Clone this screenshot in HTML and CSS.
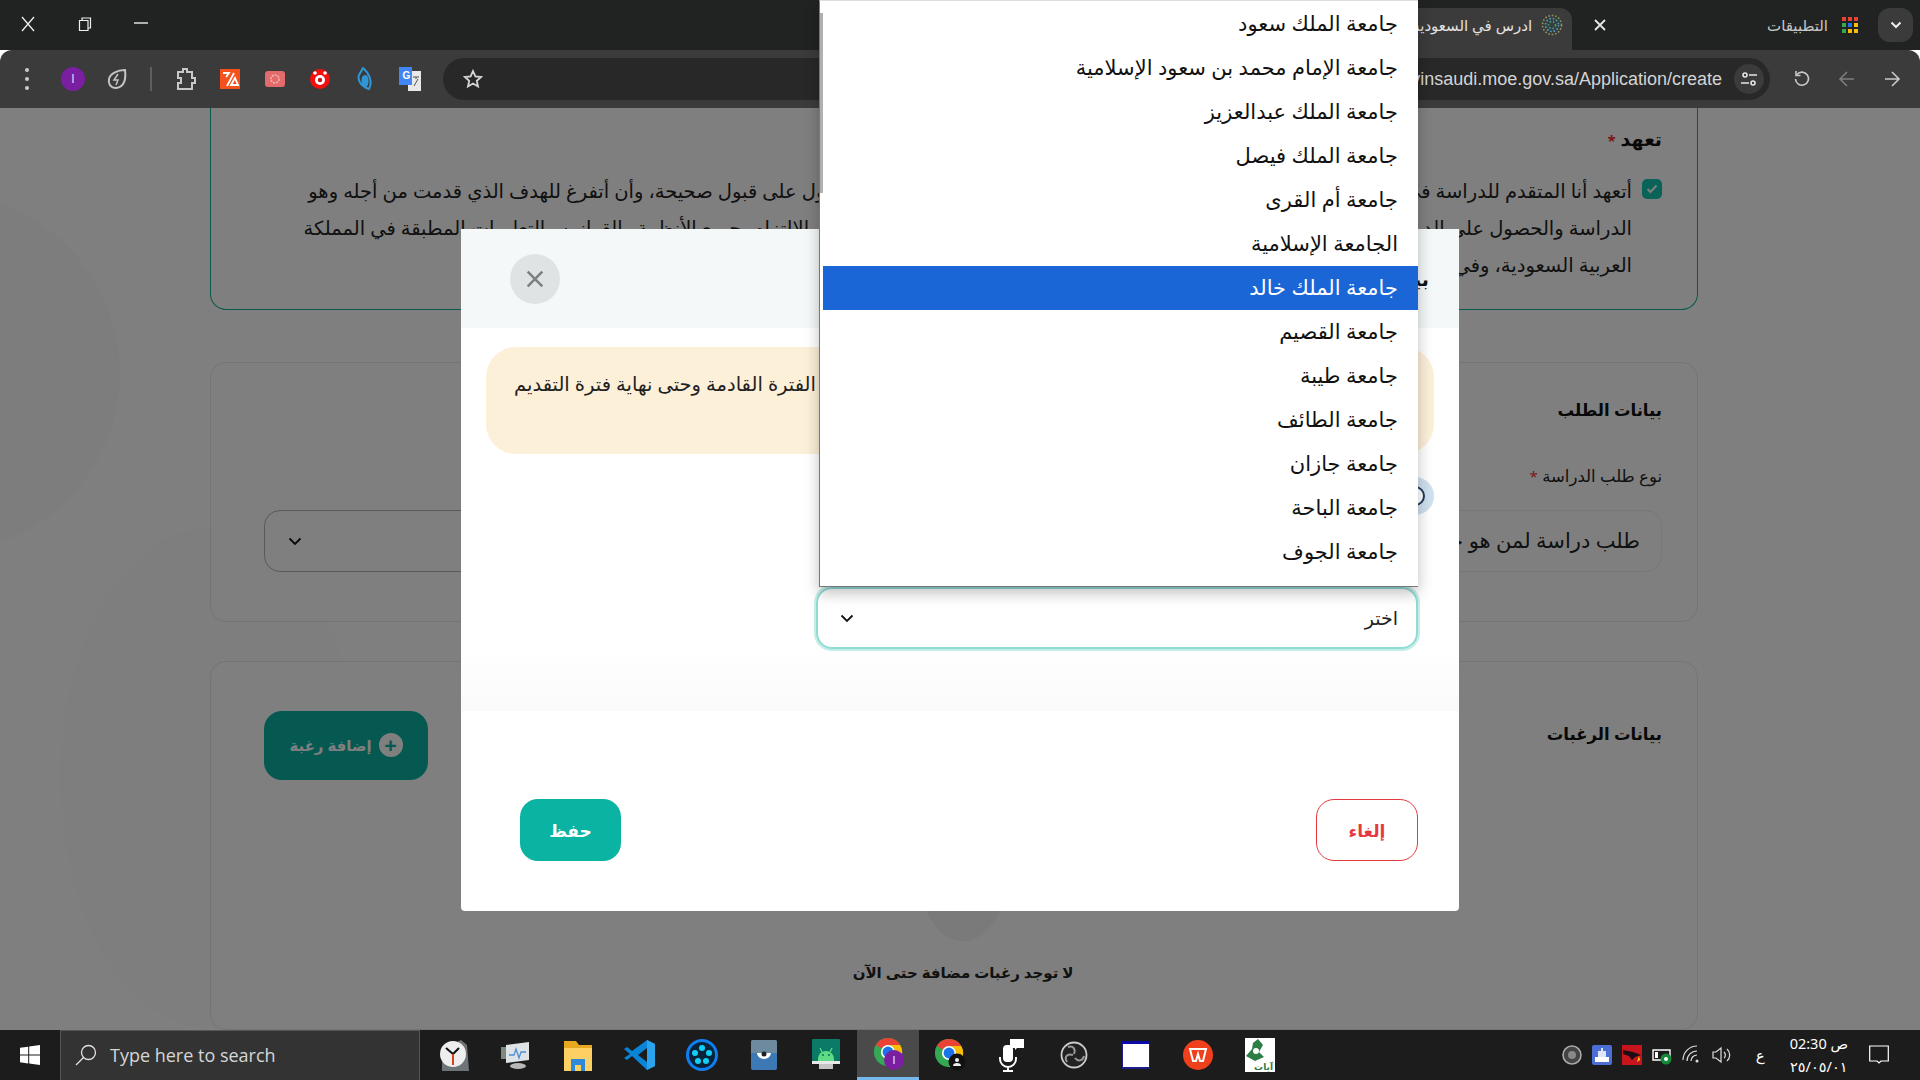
FILE: index.html
```html
<!DOCTYPE html>
<html lang="ar">
<head>
    <meta charset="UTF-8">
    <meta name="viewport" content="width=device-width, initial-scale=1.0">
    <title>ادرس في السعودية</title>
    <link rel="stylesheet" href="styles.css">
</head>
<body>
    <svg class="defs" width="0" height="0">
        <symbol id="chrome" viewBox="0 0 32 32">
            <circle cx="16" cy="16" r="15" fill="#34a853"/>
            <path d="M16 1a15 15 0 0 1 13 7.500H16a7.500 7.500 0 0 0-6.500 3.750L3 8.500A15 15 0 0 1 16 1z" fill="#ea4335"/>
            <path d="M29 8.500A15 15 0 0 1 16 31l6.500-11.250A7.500 7.500 0 0 0 16 8.500z" fill="#fbbc04"/>
            <circle cx="16" cy="16" r="7.500" fill="#fff"/>
            <circle cx="16" cy="16" r="5.800" fill="#1a73e8"/>
        </symbol>
    </svg>

    <div class="app">
        <div class="tabstrip">
            <div class="winbtns">
                <svg width="16" height="16" viewBox="0 0 16 16"><path d="M2 1l12 14M14 1L2 15" stroke="#eee" stroke-width="1.300" fill="none"/></svg>
                <svg width="14" height="14" viewBox="0 0 14 14"><path d="M1.500 3.500h8.500v10H1.500zM4 3.500V1h8.500v10H10" stroke="#eee" stroke-width="1.200" fill="none"/></svg>
                <svg width="14" height="14" viewBox="0 0 14 14"><path d="M0 6h14" stroke="#eee" stroke-width="1.400"/></svg>
            </div>
            <div class="tab">
                <span class="tab-title">ادرس في السعودية</span>
                <svg width="22" height="22" viewBox="0 0 22 22" fill="none" stroke-width="1.600" stroke-dasharray="1.600 1.800">
                    <circle cx="11" cy="11" r="9.500" stroke="#8a9a5b"/>
                    <circle cx="11" cy="11" r="6.500" stroke="#4aa3c7"/>
                    <circle cx="11" cy="11" r="3.500" stroke="#2fa58e"/>
                </svg>
            </div>
            <svg class="tab-close" width="12" height="12" viewBox="0 0 12 12"><path d="M1 1l10 10M11 1L1 11" stroke="#e6e6e6" stroke-width="1.800"/></svg>
            <div class="apps">
                <span>التطبيقات</span>
                <svg width="18" height="18" viewBox="0 0 18 18">
                    <path d="M1 1h4v4H1z" fill="#ea4335"/><path d="M7 1h4v4H7z" fill="#ea4335"/><path d="M13 1h4v4h-4z" fill="#ea4335"/>
                    <path d="M1 7h4v4H1z" fill="#34a853"/><path d="M7 7h4v4H7z" fill="#1a73e8"/><path d="M13 7h4v4h-4z" fill="#fbbc04"/>
                    <path d="M1 13h4v4H1z" fill="#34a853"/><path d="M7 13h4v4H7z" fill="#fbbc04"/><path d="M13 13h4v4h-4z" fill="#fbbc04"/>
                </svg>
            </div>
            <div class="tabsearch">
                <svg width="12" height="8" viewBox="0 0 12 8"><path d="M1.500 1.500L6 6l4.500-4.500" stroke="#eee" stroke-width="2" fill="none"/></svg>
            </div>
        </div>

        <div class="toolbar">
            <div class="exts">
                <svg class="ext" width="6" height="26" viewBox="0 0 6 26"><circle cx="3" cy="4" r="2" fill="#ccc"/><circle cx="3" cy="13" r="2" fill="#ccc"/><circle cx="3" cy="22" r="2" fill="#ccc"/></svg>
                <span class="avatar">I</span>
                <svg class="ext" width="22" height="24" viewBox="0 0 22 24" fill="none" stroke="#c4c4c4" stroke-width="2"><path d="M19 3c1 8 0 17-9 18-6 0-8-5-7-9 1-5 8-9 16-9z"/><path d="M12 7l-4 6h4l-2 5" stroke-width="1.500"/></svg>
                <span class="divider"></span>
                <svg class="ext" width="22" height="24" viewBox="0 0 22 24" fill="none" stroke="#c8c8c8" stroke-width="2"><path d="M3 5h5V2h4v3h5v6h3v5h-3v6H3v-6h3v-5H3z"/></svg>
                <svg class="ext" width="20" height="20" viewBox="0 0 20 20"><path d="M0 0h20v20H0z" fill="#f4511e"/><path d="M3 4h6l-3 4M14 4L7 17M11 16l4-7 3 7z" stroke="#fff" stroke-width="1.800" fill="none"/></svg>
                <svg class="ext" width="20" height="18" viewBox="0 0 20 18"><rect y="1" width="20" height="16" rx="3" fill="#e36b6b"/><circle cx="10" cy="9" r="4" fill="none" stroke="#f3b7b7" stroke-width="1.500" stroke-dasharray="2 1"/></svg>
                <svg class="ext" width="20" height="22" viewBox="0 0 20 22"><circle cx="10" cy="11" r="10" fill="#f40f0f"/><circle cx="10" cy="12" r="5" fill="#fff"/><circle cx="10" cy="12" r="2.200" fill="#c01818"/><circle cx="5" cy="5" r="1.800" fill="#fff"/><circle cx="15" cy="5" r="1.800" fill="#fff"/></svg>
                <svg class="ext" width="18" height="24" viewBox="0 0 18 24" fill="none" stroke="#2f97d6" stroke-width="2"><path d="M8 1c6 5 10 14 6 21C7 20 2 14 4 8z"/><ellipse cx="10" cy="14" rx="2.500" ry="5" fill="#2f97d6"/></svg>
                <svg class="ext" width="22" height="24" viewBox="0 0 22 24"><path d="M9 4h13v20H9z" fill="#e8e8e8"/><path d="M0 0h13v18H0z" fill="#4285f4"/><text x="3.500" y="12" class="ext-g">G</text><path d="M14 10h6M17 10v2M15 19l4-7" stroke="#555" stroke-width="1" fill="none"/></svg>
            </div>
            <div class="omnibox">
                <svg class="star" width="20" height="20" viewBox="0 0 20 20"><path d="M10 2l2.400 5.400 5.600.6-4.200 3.800 1.200 5.700-5-3-5 3 1.200-5.700L2 8l5.600-.6z" fill="none" stroke="#d6d6d6" stroke-width="1.800"/></svg>
                <span class="url">https://studyinsaudi.moe.gov.sa/Application/create</span>
                <span class="tune">
                    <svg width="16" height="14" viewBox="0 0 16 14" fill="none" stroke="#e6e6e6" stroke-width="1.600"><circle cx="4" cy="3" r="2"/><path d="M8 3h8M0 11h8"/><circle cx="12" cy="11" r="2"/></svg>
                </span>
            </div>
            <div class="navbtns">
                <svg width="18" height="18" viewBox="0 0 18 18" fill="none" stroke="#c9c9c9" stroke-width="1.600"><path d="M4 4.500a6.500 6.500 0 1 1-1.500 4.500"/><path d="M3 1v4.500h4.500"/></svg>
                <svg width="18" height="18" viewBox="0 0 18 18" fill="none" stroke="#7d7d7d" stroke-width="1.600"><path d="M16 9H2M9 2L2 9l7 7"/></svg>
                <svg width="18" height="18" viewBox="0 0 18 18" fill="none" stroke="#c9c9c9" stroke-width="1.600"><path d="M2 9h14M9 2l7 7-7 7"/></svg>
            </div>
        </div>

        <div class="page">
            <div class="blob blob-a"></div>
            <div class="blob blob-b"></div>

            <section class="card card-pledge">
                <h2 class="card-title">تعهد <span class="req">*</span></h2>
                <div class="pledge">
                    <span class="checkbox">
                        <svg width="12" height="10" viewBox="0 0 12 10"><path d="M1.500 5l3 3 6-6.500" stroke="#fff" stroke-width="2" fill="none"/></svg>
                    </span>
                    <p class="pledge-text">
                        <span>أتعهد أنا المتقدم للدراسة في المملكة العربية السعودية بموجب الطلب بأن جميع البيانات المقدمة للحصول على قبول صحيحة، وأن أتفرغ للهدف الذي قدمت من أجله وهو</span>
                        <span>الدراسة والحصول على الدرجة العلمية، وأن ألتزم بجميع التعليمات الصادرة عن الجهات المختصة، وأتعهد بالالتزام بجميع الأنظمة والقوانين والتعليمات المطبقة في المملكة</span>
                        <span>العربية السعودية، وفي حال مخالفة ذلك أتحمل كامل المسؤولية.</span>
                    </p>
                </div>
            </section>

            <section class="card card-request">
                <h2 class="card-title">بيانات الطلب</h2>
                <label class="field-label">نوع طلب الدراسة <span class="req">*</span></label>
                <div class="request-row">
                    <div class="fake-input">طلب دراسة لمن هو خارج المملكة</div>
                    <div class="fake-select">
                        <svg width="14" height="9" viewBox="0 0 14 9"><path d="M1.500 1.500L7 7l5.500-5.500" stroke="#111" stroke-width="1.800" fill="none"/></svg>
                    </div>
                </div>
            </section>

            <section class="card card-wishes">
                <div class="wishes-head">
                    <h2 class="card-title">بيانات الرغبات</h2>
                    <button class="add-btn">
                        <span class="add-icon">+</span>
                        إضافة رغبة
                    </button>
                </div>
                <div class="empty">
                    <div class="empty-pic"></div>
                    <p>لا توجد رغبات مضافة حتى الآن</p>
                </div>
            </section>

            <div class="backdrop"></div>

            <div class="modal">
                <div class="modal-head">
                    <span class="modal-title">بيانات الرغبة</span>
                    <button class="modal-close">
                        <svg width="18" height="18" viewBox="0 0 16 16"><path d="M1.500 1.500l13 13M14.500 1.500l-13 13" stroke="#7a7f7f" stroke-width="2.200"/></svg>
                    </button>
                </div>
                <div class="modal-body">
                    <div class="alert">يمكنك التقديم من بداية الفترة القادمة وحتى نهاية فترة التقديم</div>
                    <span class="radio"></span>
                    <div class="uni-select">
                        <span>اختر</span>
                        <svg width="14" height="9" viewBox="0 0 14 9"><path d="M1.500 1.500L7 7l5.500-5.500" stroke="#111" stroke-width="1.800" fill="none"/></svg>
                    </div>
                </div>
                <div class="modal-fade"></div>
                <div class="modal-foot">
                    <button class="btn-cancel">إلغاء</button>
                    <button class="btn-save">حفظ</button>
                </div>
            </div>
        </div>

        <div class="taskbar">
            <div class="start">
                <svg width="20" height="20" viewBox="0 0 20 20"><path d="M0 2.800l8.200-1.100v7.900H0zM9.200 1.500L20 0v9.600H9.200zM0 10.500h8.200v7.900L0 17.200zM9.200 10.500H20V20L9.200 18.500z" fill="#fff"/></svg>
            </div>
            <div class="search">
                <svg width="22" height="22" viewBox="0 0 22 22" fill="none" stroke="#e2e2e2" stroke-width="1.300"><circle cx="13.500" cy="8.500" r="7"/><path d="M8.500 13.500L1 21"/></svg>
                <span>Type here to search</span>
            </div>
            <div class="task-icons">
                <span class="task"><svg width="30" height="32" viewBox="0 0 30 32"><path d="M3 32V12L22 1l6 5 2 26z" fill="#6f7479"/><circle cx="14" cy="15" r="13" fill="#eee"/><path d="M14 15L7 9M14 15l6-6" stroke="#111" stroke-width="2"/><path d="M14 15v11" stroke="#d8431e" stroke-width="2"/></svg></span>
                <span class="task"><svg width="30" height="32" viewBox="0 0 30 32"><path d="M5 6l23-3v18L5 24z" fill="#dfe3e6"/><path d="M8 16h5l2-6 3 9 2-6h5" stroke="#4a90d9" stroke-width="1.300" fill="none"/><ellipse cx="17" cy="27" rx="8" ry="3" fill="#b8b8b8"/><path d="M0 8h5v12H0z" fill="#7d8a80"/></svg></span>
                <span class="task"><svg width="28" height="32" viewBox="0 0 28 32"><path d="M0 2h12l3 4h13v26H0z" fill="#e8a920"/><path d="M0 9h28v23H0z" fill="#fcd062"/><path d="M7 20h14v12h-4v-6h-6v6H7z" fill="#2f89d8"/></svg></span>
                <span class="task"><svg width="32" height="32" viewBox="0 0 32 32"><path d="M23 1l8 4v22l-8 4L8 17l-5 4-3-2 6-4-6-5 3-2 5 4z" fill="#0a84d6"/><path d="M23 9v14l-9-7z" fill="#1c1c1c"/><path d="M23 1l8 4v22l-8 4z" fill="#2aa3ec"/></svg></span>
                <span class="task"><svg width="32" height="32" viewBox="0 0 32 32"><circle cx="16" cy="16" r="14.500" fill="#07233b" stroke="#0f7ff0" stroke-width="3"/><g fill="#10d0f5"><circle cx="16" cy="9" r="3"/><circle cx="9" cy="14" r="3"/><circle cx="23" cy="14" r="3"/><circle cx="12" cy="22" r="3"/><circle cx="20" cy="22" r="3"/></g></svg></span>
                <span class="task"><svg width="26" height="32" viewBox="0 0 26 32"><rect y="1" width="26" height="30" rx="2" fill="#3d7ab5"/><path d="M0 3a2 2 0 0 1 2-2h22a2 2 0 0 1 2 2v11H0z" fill="#6d8a9e"/><path d="M6 14h14a7 6 0 0 1-14 0z" fill="#fff"/><circle cx="13" cy="15" r="2.500" fill="#222"/></svg></span>
                <span class="task"><svg width="28" height="32" viewBox="0 0 28 32"><rect width="28" height="22" rx="1" fill="#0b7a66"/><path d="M6 20a8 8 0 0 1 16 0z" fill="#5fdc83"/><path d="M8 9l2 4M20 9l-2 4" stroke="#5fdc83" stroke-width="1.300"/><circle cx="11" cy="16" r="1.100" fill="#0b7a66"/><circle cx="17" cy="16" r="1.100" fill="#0b7a66"/><path d="M6 20h16v2H6z" fill="#5fdc83"/><path d="M0 22h28v3H0z" fill="#e8e8e8"/><path d="M7 25h14v5H7z" fill="#c4c4c4"/></svg></span>
                <span class="task task-active">
                    <svg width="30" height="36" viewBox="0 0 30 36"><use href="#chrome" width="30" height="30" y="1"/><circle cx="21" cy="24" r="10" fill="#7b1fa2"/><path d="M21 20v8" stroke="#d9b3e8" stroke-width="1.600"/></svg>
                </span>
                <span class="task">
                    <svg width="32" height="36" viewBox="0 0 32 36"><use href="#chrome" width="30" height="30" y="1"/><circle cx="23" cy="25" r="8.500" fill="#111"/><circle cx="23" cy="23" r="2" fill="#eee"/><path d="M19 29a4 3 0 0 1 8 0z" fill="#eee"/></svg>
                </span>
                <span class="task"><svg width="26" height="34" viewBox="0 0 26 34" fill="none" stroke="#fff" stroke-width="2"><rect x="4" y="7" width="10" height="17" rx="4" fill="#fff" stroke="none"/><path d="M1 19v2a8 8 0 0 0 16 0v-2M9 29v4M4 33h10"/><path d="M11 1h14v9h-7l-2 2v-2h-5z" fill="#fff" stroke="none"/></svg></span>
                <span class="task"><svg width="28" height="28" viewBox="0 0 28 28"><circle cx="14" cy="14" r="12.500" fill="#222" stroke="#ccc" stroke-width="1.800"/><path d="M8 6c5-2 8 2 6 7M24 15c-1 5-6 6-9 2M7 21c-3-5 0-9 6-7" stroke="#999" stroke-width="2" fill="none"/></svg></span>
                <span class="task"><svg width="28" height="28" viewBox="0 0 28 28"><rect width="28" height="28" fill="#1c1f8a"/><path d="M0 0h28v3H0z" fill="#0a0aa8"/><rect x="1" y="3" width="26" height="23" fill="#fff"/></svg></span>
                <span class="task"><svg width="30" height="30" viewBox="0 0 30 30"><circle cx="15" cy="15" r="15" fill="#f0401b"/><path d="M7 9h16l-3 12h-3l-2-7-2 7h-3z" fill="none" stroke="#fff" stroke-width="2"/></svg></span>
                <span class="task"><svg width="30" height="34" viewBox="0 0 30 34"><path d="M0 0h30v34H0z" fill="#fff"/><path d="M13 1l5 6-4 7 5 5-9 4-9-5 6-7 1-6z" fill="#2d7d46"/><circle cx="11" cy="13" r="3" fill="#fff"/><text x="28" y="32" class="ayat">آيات</text></svg></span>
            </div>
            <div class="tray">
                <svg class="tray-a" width="20" height="20" viewBox="0 0 20 20"><circle cx="10" cy="10" r="9" fill="#444" stroke="#aaa" stroke-width="1.600"/><circle cx="10" cy="10" r="4" fill="#888"/></svg>
                <svg class="tray-a" width="20" height="20" viewBox="0 0 20 20"><rect width="20" height="20" rx="2" fill="#4c6fd6"/><path d="M3 12h14v5H3z" fill="#fff"/><path d="M6 12V6h3V3h2v3h3v6z" fill="#dfe7f7"/></svg>
                <svg class="tray-a" width="20" height="20" viewBox="0 0 20 20"><rect width="20" height="20" fill="#c8141c"/><path d="M1 5l10 2 8 3-6 2-3 3-3-4-6-2z" fill="#1c0c16"/><path d="M17 11l-2 6 3-2z" fill="#f4d316"/></svg>
                <svg class="tray-a" width="20" height="20" viewBox="0 0 20 20"><path d="M1 5h17v10H1z" fill="none" stroke="#fff" stroke-width="1.400"/><path d="M3 7h3v6H3z" fill="#fff"/><circle cx="14" cy="14" r="5.500" fill="#138a38"/><circle cx="14" cy="14" r="2" fill="#fff"/></svg>
                <svg class="tray-a" width="20" height="20" viewBox="0 0 20 20" fill="none" stroke="#ddd" stroke-width="1.200"><path d="M1 15A14 14 0 0 1 15 1M5 16A10 10 0 0 1 15 6M9 16a6 6 0 0 1 6-6"/><circle cx="15" cy="16" r="1.500" fill="#ddd" stroke="none"/></svg>
                <svg class="tray-a" width="20" height="20" viewBox="0 0 20 20" fill="none" stroke="#ddd" stroke-width="1.200"><path d="M1 7h3l5-4v14l-5-4H1zM12 7a4 4 0 0 1 0 6M15 4a8 8 0 0 1 0 12"/></svg>
                <span class="lang">ع</span>
                <div class="clock">
                    <span>ص 02:30</span>
                    <span>٢٥/٠٥/٠١</span>
                </div>
                <svg class="notif" width="20" height="20" viewBox="0 0 20 20"><path d="M.7 1h18.600v15H12l-2 2-2-2H.7z" fill="none" stroke="#fff" stroke-width="1.200"/></svg>
            </div>
        </div>

        <div class="dropdown">
            <span class="scroll-thumb"></span>
            <ul class="uni-list">
                <li>جامعة الملك سعود</li>
                <li>جامعة الإمام محمد بن سعود الإسلامية</li>
                <li>جامعة الملك عبدالعزيز</li>
                <li>جامعة الملك فيصل</li>
                <li>جامعة أم القرى</li>
                <li>الجامعة الإسلامية</li>
                <li class="selected">جامعة الملك خالد</li>
                <li>جامعة القصيم</li>
                <li>جامعة طيبة</li>
                <li>جامعة الطائف</li>
                <li>جامعة جازان</li>
                <li>جامعة الباحة</li>
                <li>جامعة الجوف</li>
            </ul>
        </div>
    </div>
</body>
</html>
```
FILE: styles.css
```css
* {
    box-sizing: border-box;
}
html, body {
    margin: 0;
    padding: 0;
    height: 100%;
}
body {
    font-family: "Noto Sans", "DejaVu Sans", sans-serif;
    color: #222;
    overflow: hidden;
}
.defs {
    position: absolute;
}
.ext-g {
    font: bold 10px "Liberation Sans", sans-serif;
    fill: #fff;
}
.ayat {
    font: bold 9px "DejaVu Sans", sans-serif;
    fill: #2d7d46;
    text-anchor: end;
}
.app {
    position: relative;
    width: 1920px;
    height: 1080px;
    display: flex;
    flex-direction: column;
    overflow: hidden;
}

/* browser chrome, mirrored */
.tabstrip {
    height: 50px;
    background-color: #212322;
    display: flex;
    align-items: center;
}
.winbtns {
    display: flex;
    align-items: center;
    gap: 42px;
    padding-left: 20px;
    padding-bottom: 2px;
}
.tab {
    margin-left: auto;
    width: 300px;
    height: 42px;
    align-self: flex-end;
    background-color: #3b3b3b;
    border-radius: 12px 12px 0 0;
    display: flex;
    align-items: center;
    justify-content: flex-end;
    gap: 9px;
    padding: 0 9px 8px 0;
    color: #e3e3e3;
    font-size: 15px;
}
.tab-close {
    margin-left: 22px;
}
.apps {
    margin-left: 161px;
    display: flex;
    align-items: center;
    gap: 13px;
    color: #c9c9c9;
    font-size: 15px;
}
.tabsearch {
    width: 35px;
    height: 34px;
    margin: 0 7px 0 19px;
    border-radius: 12px;
    background-color: #3b3b3b;
    display: flex;
    align-items: center;
    justify-content: center;
}
.toolbar {
    height: 58px;
    background-color: #3b3b3b;
    border-radius: 12px 12px 0 0;
    display: flex;
    align-items: center;
}
.exts {
    width: 443px;
    display: flex;
    align-items: center;
    padding-left: 24px;
    flex-shrink: 0;
}
.ext {
    flex-shrink: 0;
}
.exts .ext:nth-of-type(1) { margin-right: 31px; }
.exts .ext:nth-of-type(2) { margin: 0 22px 0 21px; }
.exts .ext:nth-of-type(3) { margin: 0 23px 0 23px; }
.exts .ext:nth-of-type(4) { margin-right: 25px; }
.exts .ext:nth-of-type(5) { margin-right: 25px; }
.exts .ext:nth-of-type(6) { margin-right: 25px; }
.exts .ext:nth-of-type(7) { margin-right: 26px; }
.avatar {
    width: 24px;
    height: 24px;
    border-radius: 50%;
    background-color: #7b1fa2;
    color: #e8d5f0;
    font: 12px "Liberation Sans", sans-serif;
    display: flex;
    align-items: center;
    justify-content: center;
}
.divider {
    width: 2px;
    height: 24px;
    background-color: #5f5f5f;
}
.omnibox {
    width: 1327px;
    height: 42px;
    background-color: #282828;
    border-radius: 21px;
    display: flex;
    align-items: center;
    padding: 0 6px 0 20px;
    flex-shrink: 0;
}
.url {
    margin-left: auto;
    color: #d4d4d4;
    font-size: 18px;
    font-family: "Liberation Sans", sans-serif;
}
.tune {
    width: 30px;
    height: 30px;
    margin-left: 12px;
    border-radius: 50%;
    background-color: #3b3b3b;
    display: flex;
    align-items: center;
    justify-content: center;
}
.navbtns {
    display: flex;
    align-items: center;
    gap: 27px;
    padding-left: 23px;
}

/* page behind the dialog */
.page {
    position: relative;
    flex: 1;
    min-height: 0;
    overflow: hidden;
    background-color: #fff;
    padding: 0 222px 0 210px;
    direction: rtl;
    display: flex;
    flex-direction: column;
}
.blob {
    position: absolute;
    border-radius: 50%;
    background-color: #fbfbfb;
}
.blob-a {
    width: 360px;
    height: 360px;
    left: -240px;
    top: 85px;
}
.blob-b {
    width: 300px;
    height: 500px;
    left: 60px;
    top: 420px;
    background-color: #fcfcfc;
}
.card {
    position: relative;
    background-color: #fff;
    border: 1px solid #e6e8e8;
    border-radius: 16px;
    padding: 0 35px 0 53px;
}
.card-pledge {
    height: 202px;
    border: 1px solid #0fb39a;
    border-top: 0;
    border-radius: 0 0 16px 16px;
    padding-top: 15px;
    flex-shrink: 0;
}
.card-request {
    height: 260px;
    margin-top: 52px;
    padding-top: 31px;
    flex-shrink: 0;
}
.card-wishes {
    flex: 1;
    margin-top: 39px;
    padding-top: 56px;
}
.card-title {
    margin: 0;
    font-size: 16.500px;
    font-weight: 700;
    line-height: 32px;
    color: #111;
}
.card-pledge .card-title {
    font-size: 19px;
}
.req {
    color: #e33;
    font-size: 15px;
}
.pledge {
    display: flex;
    gap: 10px;
    margin-top: 16px;
}
.checkbox {
    width: 20px;
    height: 20px;
    margin-top: 7px;
    flex-shrink: 0;
    border-radius: 5px;
    background-color: #14c6b0;
    display: flex;
    align-items: center;
    justify-content: center;
}
.pledge-text {
    margin: 0;
    font-size: 19.500px;
    line-height: 37px;
    color: #222;
}
.pledge-text span {
    display: block;
    white-space: nowrap;
}
.field-label {
    display: block;
    margin-top: 35px;
    font-size: 16.500px;
    line-height: 30px;
}
.request-row {
    display: flex;
    justify-content: space-between;
    margin-top: 19px;
}
.fake-input {
    width: 620px;
    height: 62px;
    border: 1px solid #efefef;
    border-radius: 16px;
    padding: 0 21px 3px 0;
    display: flex;
    align-items: center;
    font-size: 21px;
}
.fake-select {
    width: 620px;
    height: 62px;
    border: 1px solid #b4b4b4;
    border-radius: 16px;
    padding-left: 23px;
    display: flex;
    align-items: center;
    justify-content: flex-end;
}
.wishes-head {
    display: flex;
    justify-content: space-between;
    align-items: flex-start;
}
.add-btn {
    width: 164px;
    height: 69px;
    margin-top: -7px;
    padding-bottom: 3px;
    border: 0;
    border-radius: 18px;
    background-color: #0bb3a2;
    color: #fff;
    font: 700 15px "Noto Sans", "DejaVu Sans", sans-serif;
    display: flex;
    align-items: center;
    justify-content: center;
    gap: 7px;
}
.add-icon {
    width: 24px;
    height: 24px;
    border-radius: 50%;
    background-color: #fff;
    color: #0bb3a2;
    font-size: 22px;
    line-height: 22px;
}
.empty {
    text-align: center;
}
.empty-pic {
    width: 92px;
    height: 146px;
    margin: 15px auto 0;
    border-radius: 50%;
    background-color: #f4f4f4;
}
.empty p {
    margin: 21px 0 0;
    font-size: 15px;
    font-weight: 700;
    color: #222;
}
.backdrop {
    position: absolute;
    inset: 0;
    background-color: rgba(0, 0, 0, 0.5);
}

/* dialog */
.modal {
    position: absolute;
    left: 461px;
    top: 121px;
    width: 998px;
    height: 682px;
    background-color: #fff;
    border-radius: 4px;
    display: flex;
    flex-direction: column;
}
.modal-head {
    height: 99px;
    background-color: #f4f8f8;
    display: flex;
    align-items: center;
    justify-content: space-between;
    padding: 0 30px 0 49px;
    flex-shrink: 0;
}
.modal-title {
    font-size: 19px;
    font-weight: 700;
    color: #111;
}
.modal-close {
    width: 50px;
    height: 50px;
    border: 0;
    border-radius: 50%;
    background-color: #dfe3e3;
    display: flex;
    align-items: center;
    justify-content: center;
}
.modal-body {
    position: relative;
    padding: 19px 25px 0;
    flex-shrink: 0;
}
.alert {
    height: 107px;
    border-radius: 30px;
    background-color: #fdf0d9;
    padding: 22px 0 0 28px;
    font-size: 19.500px;
    line-height: 30px;
    text-align: left;
    white-space: nowrap;
    color: #222;
}
.radio {
    position: absolute;
    right: 34px;
    top: 158px;
    width: 20px;
    height: 20px;
    border: 2px solid #1d3b5e;
    border-radius: 50%;
    background-color: #fff;
    box-shadow: 0 0 0 9px #cfe0ee;
}
.uni-select {
    width: 602px;
    height: 62px;
    margin: 133px 16px 0 0;
    border: 2px solid #8edcd3;
    box-shadow: 0 0 0 2px #c4ede8;
    border-radius: 16px;
    padding: 0 18px 0 22px;
    display: flex;
    align-items: center;
    justify-content: space-between;
    font-size: 19px;
    color: #222;
}
.modal-fade {
    height: 62px;
    background: linear-gradient(to bottom, #fff, #fafafa);
    flex-shrink: 0;
}
.modal-foot {
    flex: 1;
    display: flex;
    justify-content: space-between;
    padding: 88px 41px 50px 59px;
}
.btn-cancel,
.btn-save {
    height: 62px;
    border-radius: 18px;
    font: 700 17px "Noto Sans", "DejaVu Sans", sans-serif;
}
.btn-cancel {
    width: 102px;
    border: 1px solid #e6393f;
    background-color: #fff;
    color: #e6393f;
}
.btn-save {
    width: 101px;
    border: 0;
    background-color: #0bb3a2;
    color: #fff;
}

/* native select popup */
.dropdown {
    position: absolute;
    left: 819px;
    top: 0;
    width: 599px;
    height: 587px;
    background-color: #fff;
    border: 1px solid #777;
    border-top: 1px solid #ddd;
    border-right: 0;
    box-shadow: 0 6px 14px rgba(0, 0, 0, 0.25);
    direction: rtl;
}
.scroll-thumb {
    position: absolute;
    left: 0;
    top: 12px;
    width: 3px;
    height: 180px;
    background-color: #b0b0b0;
}
.uni-list {
    list-style: none;
    margin: 0 0 0 3px;
    padding: 1px 0 0;
}
.uni-list li {
    height: 44px;
    line-height: 42px;
    padding-right: 20px;
    font-size: 21px;
    color: #111;
}
.uni-list .selected {
    background-color: #1a66d6;
    color: #fff;
}

/* windows taskbar */
.taskbar {
    height: 50px;
    background-color: #1c1c1c;
    display: flex;
    align-items: center;
}
.start {
    width: 60px;
    display: flex;
    justify-content: center;
}
.search {
    width: 360px;
    height: 50px;
    background-color: #333;
    border: 1px solid #565656;
    border-bottom: 0;
    display: flex;
    align-items: center;
    gap: 13px;
    padding: 0 0 2px 14px;
    color: #d6d6d6;
    font: 18px "Open Sans", sans-serif;
}
.task-icons {
    display: flex;
    margin-left: 3px;
}
.task {
    width: 62px;
    height: 50px;
    display: flex;
    align-items: center;
    justify-content: center;
}
.task-active {
    background-color: #4a4a4a;
    border-bottom: 3px solid #76b9ed;
}
.tray {
    margin-left: auto;
    display: flex;
    align-items: center;
    color: #fff;
    padding-right: 31px;
}
.tray-a {
    margin-right: 10px;
}
.lang {
    margin: 0 25px 0 14px;
    font-size: 15px;
}
.clock {
    display: flex;
    flex-direction: column;
    align-items: center;
    font-size: 14.500px;
    line-height: 23px;
    direction: rtl;
}
.notif {
    margin-left: 21px;
}
```
